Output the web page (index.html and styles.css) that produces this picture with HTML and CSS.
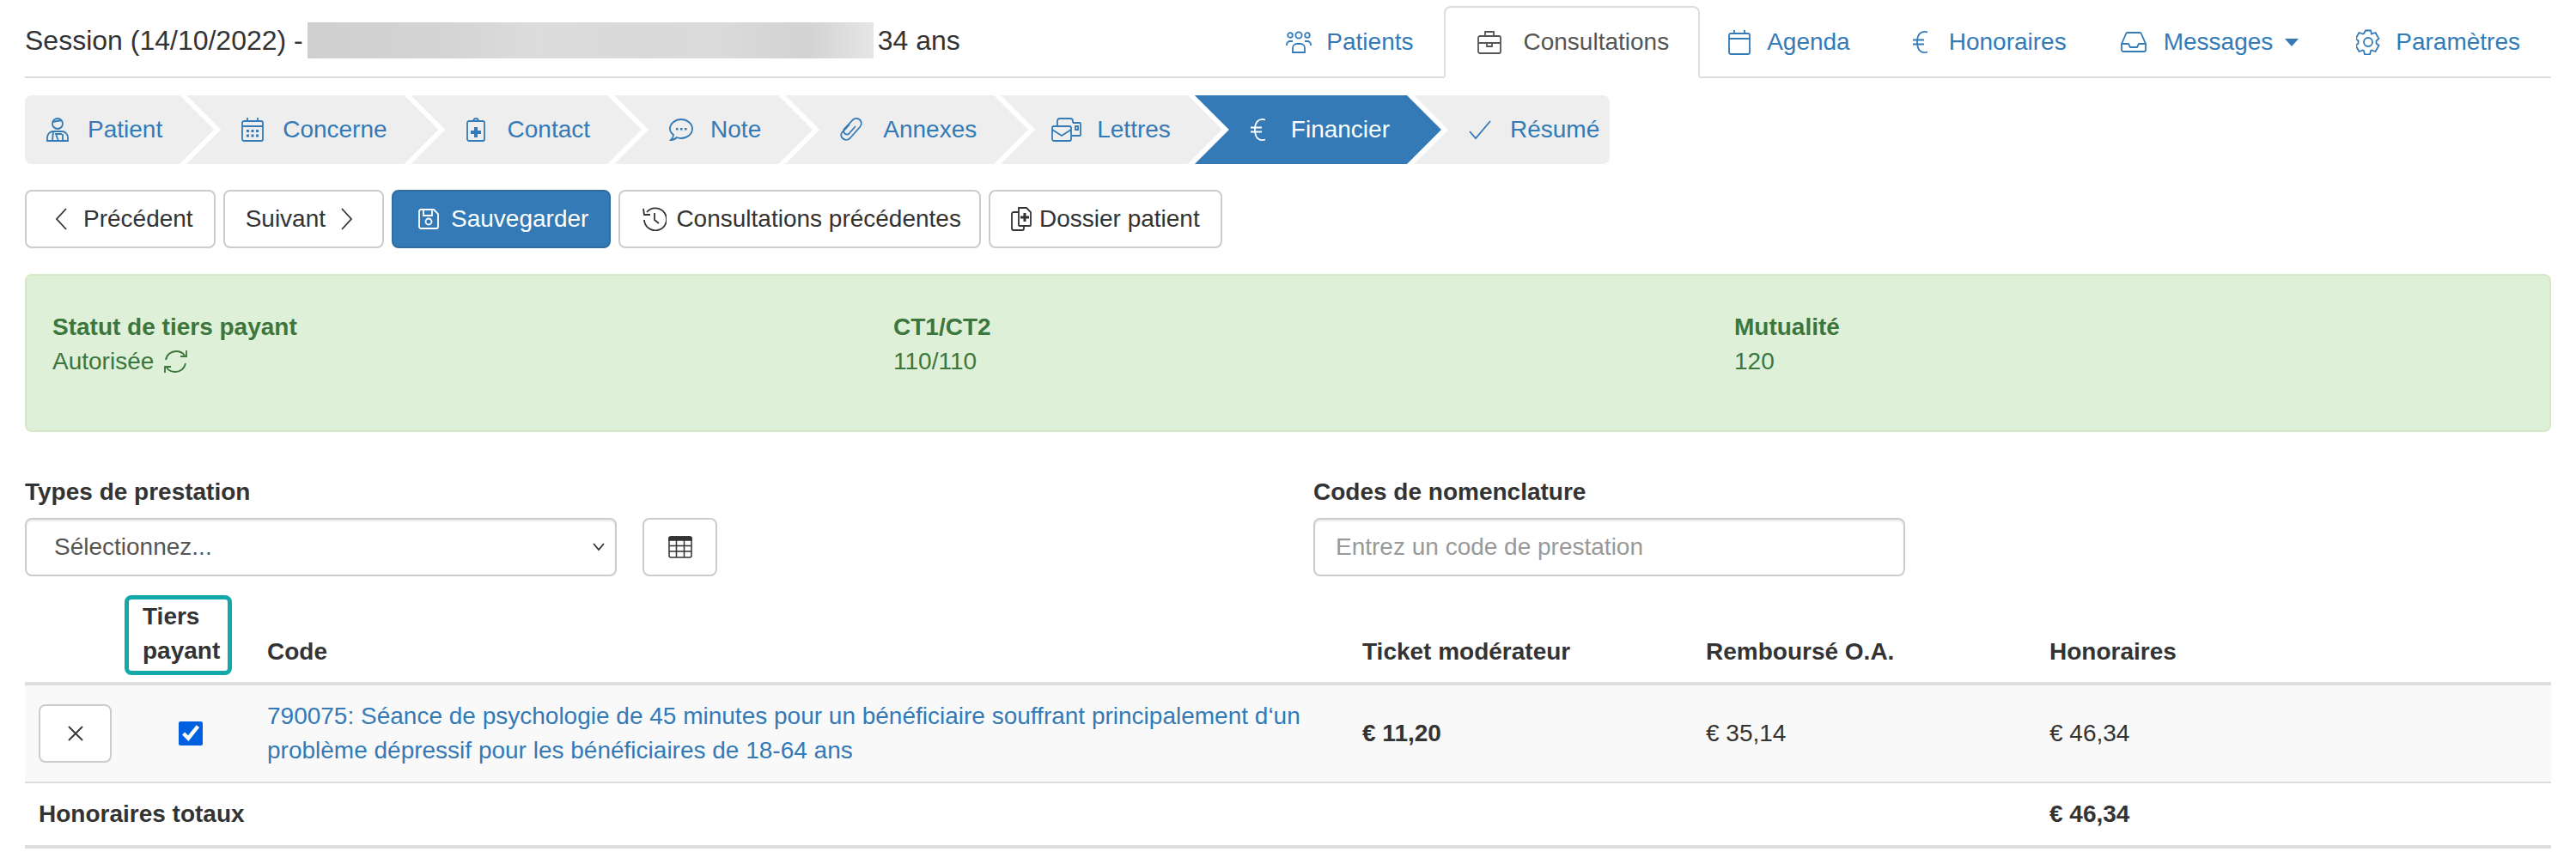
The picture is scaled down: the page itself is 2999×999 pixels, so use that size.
FILE: index.html
```html
<!DOCTYPE html>
<html lang="fr">
<head>
<meta charset="UTF-8">
<title>Session</title>
<link rel="stylesheet" href="styles.css">
</head>
<body>
<header class="top-bar">
    <div class="session-title">
        <span>Session (14/10/2022) -</span>
        <span class="blurred-name"></span>
        <span>34 ans</span>
    </div>
    <nav class="main-tabs">
        <a class="main-tab"><span class="tab-icon"><svg class="ic" width="30" height="28" viewBox="0 0 30 28"><circle cx="15" cy="6" r="3.6"/><circle cx="5" cy="6" r="2.8"/><circle cx="25" cy="6" r="2.8"/><path d="M8 26v-5a5 5 0 0 1 5-5h4a5 5 0 0 1 5 5v5zM1 18v-1a4 4 0 0 1 4-4h3M29 18v-1a4 4 0 0 0-4-4h-3"/></svg></span>Patients</a>
        <a class="main-tab active"><span class="tab-icon"><svg class="ic" width="28" height="28" viewBox="0 0 28 28"><rect x="1" y="7" width="26" height="20" rx="2"/><path d="M9 7V2h10v5M1 15h26M11 15v4h6v-4"/></svg></span>Consultations</a>
        <a class="main-tab tab-agenda"><span class="tab-icon"><svg class="ic" width="26" height="30" viewBox="0 0 26 30"><rect x="1" y="5" width="24" height="24" rx="2"/><path d="M1 11h24M7 1v4M19 1v4"/></svg></span>Agenda</a>
        <a class="main-tab"><span class="tab-icon"><svg class="ic" width="20" height="28" viewBox="0 0 20 28"><path d="M18 2.500c-8-2.500-12 3-12 11.500s4 14 12 11.500M1 11.500h13M1 16.500h13"/></svg></span>Honoraires</a>
        <a class="main-tab tab-messages"><span class="tab-icon"><svg class="ic" width="30" height="24" viewBox="0 0 30 24"><path d="M1 14 6 2.500a2 2 0 0 1 2-1.500h14a2 2 0 0 1 2 1.500L29 14v7a2 2 0 0 1-2 2H3a2 2 0 0 1-2-2zM1 14h8l2 4h8l2-4h8"/></svg></span>Messages<span class="caret"></span></a>
        <a class="main-tab tab-last"><span class="tab-icon"><svg class="ic" width="28" height="30" viewBox="0 0 28 30"><circle cx="14" cy="15" r="5"/><path d="M11 1.500h6l1 4 3-1 1.500-.5 4 7-3 2.500v3l3 2.500-4 7-4.500-1.500-1 .5-1 4.500h-6l-1-4.500-1-.5-4.500 1.500-4-7 3-2.500v-3l-3-2.500 4-7 4.500 1.500 1-.5z"/></svg></span>Paramètres</a>
    </nav>
</header>

<div class="steps">
    <a class="step first"><span class="step-icon"><svg class="ic" width="26" height="28" viewBox="0 0 26 28"><circle cx="13" cy="7" r="6"/><path d="M7 5 18 3M1 27v-4a7 7 0 0 1 7-7h10a7 7 0 0 1 7 7v4zM8 16l-1 11M14 27l-3-8h7M19 19v8"/></svg></span>Patient</a>
    <a class="step"><span class="step-icon"><svg class="ic" width="26" height="28" viewBox="0 0 26 28"><rect x="1" y="4" width="24" height="23" rx="2"/><path d="M1 10h24M7 0v4M19 0v4"/><path class="dots" d="M6 14h3v3H6zM11.500 14h3v3h-3zM17 14h3v3h-3zM6 19.500h3v3H6zM11.500 19.500h3v3h-3zM17 19.500h3v3h-3z"/></svg></span>Concerne</a>
    <a class="step"><span class="step-icon"><svg class="ic" width="22" height="28" viewBox="0 0 22 28"><rect x="1" y="4" width="20" height="23" rx="2"/><path d="M7 4h8M8 4a3 3 0 0 1 6 0"/><path class="dots" d="M9 11h4v4h4v4h-4v4H9v-4H5v-4h4z"/></svg></span>Contact</a>
    <a class="step"><span class="step-icon"><svg class="ic" width="28" height="28" viewBox="0 0 28 28"><path d="M14 2c7 0 13 5 13 11s-6 11-13 11c-2 0-4-.5-5-1-1.500 1.500-4 3-7 3 1.500-1.500 3-3.500 3-6-2.500-2-4-4-4-7C1 7 7 2 14 2z"/><path class="dots" d="M8 12h2.500v2.500H8zM13 12h2.500v2.500H13zM18 12h2.500v2.500H18z"/></svg></span>Note</a>
    <a class="step step-annexes"><span class="step-icon"><svg class="ic" width="26" height="28" viewBox="0 0 26 28"><path d="M11 8 3.500 16a5 5 0 0 0-.500 8c2.500 2.500 6 2.500 8.500 0L23 11c2.500-3 2-6.500 0-8.500s-5.500-2.500-8 0L5 13c-1.500 2-1 4 .500 5.500s3.500 1.500 5 0L18 10"/></svg></span>Annexes</a>
    <a class="step step-wide"><span class="step-icon"><svg class="ic" width="35" height="28" viewBox="0 0 35 28"><path d="M7 9V4a3 3 0 0 1 3-3h12a3 3 0 0 1 3 3v2"/><path d="M25 6h8a1 1 0 0 1 1 1v13a1 1 0 0 1-1 1h-9"/><rect x="1" y="10" width="22" height="17" rx="2"/><path d="m1 14 11 7 11-7M28 10h3v4h-3z"/></svg></span>Lettres</a>
    <a class="step current"><span class="step-icon"><svg class="ic" width="20" height="28" viewBox="0 0 20 28"><path d="M18 2.500c-8-2.500-12 3-12 11.500s4 14 12 11.500M1 11.500h13M1 16.500h13"/></svg></span>Financier</a>
    <a class="step last"><span class="step-icon"><svg class="ic" width="26" height="24" viewBox="0 0 26 24"><path d="m1 14 7 8L25 2"/></svg></span>Résumé</a>
</div>

<div class="actions">
    <button class="btn btn-prev"><svg class="ic" width="14" height="30" viewBox="0 0 14 30"><path d="M13 3 2 15l11 12"/></svg>Précédent</button>
    <button class="btn btn-next">Suivant<svg class="ic" width="14" height="30" viewBox="0 0 14 30"><path d="m1 3 11 12L1 27"/></svg></button>
    <button class="btn btn-primary"><svg class="ic" width="24" height="24" viewBox="0 0 24 24"><path d="M3 1h15l5 5v15a2 2 0 0 1-2 2H3a2 2 0 0 1-2-2V3a2 2 0 0 1 2-2z"/><path d="M6 1v7h10V1"/><circle cx="12" cy="15" r="3.500"/></svg>Sauvegarder</button>
    <button class="btn btn-history"><svg class="ic" width="28" height="28" viewBox="0 0 28 28"><path d="M5 6a13 13 0 1 1-3 9M1 2l1 7h7M14 7v8l5 4"/></svg>Consultations précédentes</button>
    <button class="btn btn-record"><svg class="ic" width="24" height="28" viewBox="0 0 24 28"><path d="M9 1h9l5 5v15a1 1 0 0 1-1 1H10a1 1 0 0 1-1-1z"/><path d="M9 6H3a2 2 0 0 0-2 2v17a2 2 0 0 0 2 2h10a2 2 0 0 0 2-2v-3"/><path class="dots" d="M14.500 7h3v3.500H21v3h-3.500V17h-3v-3.500H11v-3h3.500z"/></svg>Dossier patient</button>
</div>

<div class="alert-box">
    <div>
        <strong>Statut de tiers payant</strong>
        <div class="alert-value">Autorisée <svg class="ic" width="29" height="28" viewBox="0 0 29 28"><path d="M3 12C4 6 9 2 15 2c4 0 8 2 10 5M27 1v7h-7M26 16c-1 6-6 10-12 10-4 0-8-2-10-5M2 27v-7h7"/></svg></div>
    </div>
    <div>
        <strong>CT1/CT2</strong>
        <div class="alert-value">110/110</div>
    </div>
    <div>
        <strong>Mutualité</strong>
        <div class="alert-value">120</div>
    </div>
</div>

<form class="search-form">
    <div>
        <label class="field-label" for="typePrestation">Types de prestation</label>
        <div class="select-row">
            <div class="select-wrap">
                <select id="typePrestation" class="field">
                    <option>Sélectionnez...</option>
                </select>
                <svg class="ic select-arrow" width="14" height="10" viewBox="0 0 14 10"><path d="m1 1 6 7 6-7"/></svg>
            </div>
            <button type="button" class="btn btn-table"><svg class="ic table-ic" width="28" height="26" viewBox="0 0 28 26"><rect x="1" y="1" width="26" height="24" rx="2"/><path class="table-head" d="M1 3a2 2 0 0 1 2-2h22a2 2 0 0 1 2 2v2H1z"/><path d="M1 11.500h26M1 18h26M9.500 5v20M18.500 5v20"/></svg></button>
        </div>
    </div>
    <div>
        <label class="field-label" for="codePrestation">Codes de nomenclature</label>
        <input id="codePrestation" class="field" type="text" placeholder="Entrez un code de prestation">
    </div>
</form>

<table class="fees">
    <colgroup>
        <col class="col-del"><col class="col-tp"><col class="col-code"><col class="col-amount"><col class="col-amount"><col>
    </colgroup>
    <thead>
        <tr>
            <th></th>
            <th class="th-tp"><span class="tp-highlight">Tiers payant</span></th>
            <th>Code</th>
            <th>Ticket modérateur</th>
            <th>Remboursé O.A.</th>
            <th>Honoraires</th>
        </tr>
    </thead>
    <tbody>
        <tr class="fee-row">
            <td><button class="btn btn-delete"><svg class="ic" width="20" height="20" viewBox="0 0 20 20"><path d="m2 2 16 16M18 2 2 18"/></svg></button></td>
            <td class="td-check"><input type="checkbox" checked></td>
            <td><a class="code-link">790075: Séance de psychologie de 45 minutes pour un bénéficiaire souffrant principalement d‘un problème dépressif pour les bénéficiaires de 18-64 ans</a></td>
            <td><strong>€ 11,20</strong></td>
            <td>€ 35,14</td>
            <td>€ 46,34</td>
        </tr>
    </tbody>
    <tfoot>
        <tr>
            <th colspan="5">Honoraires totaux</th>
            <th>€ 46,34</th>
        </tr>
    </tfoot>
</table>
</body>
</html>
```

FILE: styles.css
```css
* {
    box-sizing: border-box;
}
body {
    margin: 0;
    padding: 0 29px;
    font-family: "Liberation Sans", Arial, sans-serif;
    font-size: 28px;
    line-height: 40px;
    color: #333;
    background-color: #fff;
}
.ic {
    fill: none;
    stroke: currentColor;
    stroke-width: 1.8;
    flex: none;
}
.ic .dots {
    fill: currentColor;
    stroke: none;
}

/* header + tabs */
.top-bar {
    display: flex;
    justify-content: space-between;
    height: 91px;
    border-bottom: 2px solid #ddd;
}
.session-title {
    display: flex;
    align-items: center;
    gap: 5px;
    height: 42px;
    margin-top: 26px;
    font-size: 32px;
}
.blurred-name {
    width: 659px;
    height: 42px;
    background: linear-gradient(90deg, #cfcfcf 0%, #d4d4d4 25%, #dcdcdc 40%, #d9d9d9 60%, #dbdbdb 72%, #d2d2d2 88%, #e6e6e6 100%);
}
.main-tabs {
    display: flex;
    align-items: flex-end;
}
.main-tab {
    display: flex;
    align-items: center;
    height: 84px;
    margin-left: 4px;
    margin-bottom: -2px;
    padding: 0 29px 0 28px;
    border: 2px solid transparent;
    border-radius: 8px 8px 0 0;
    color: #337ab7;
}
.main-tab.active {
    padding: 0 34px 0 34px;
    border-color: #ddd #ddd #fff;
    background-color: #fff;
    color: #555;
}
.main-tab.active .tab-icon {
    margin-right: 22px;
}
.main-tab.tab-agenda {
    padding-left: 22px;
}
.main-tab.tab-messages {
    padding: 0 27px 0 24px;
}
.tab-messages .tab-icon {
    margin-right: 17px;
}
.main-tab.tab-last {
    padding-right: 34px;
}
.tab-icon {
    display: flex;
    justify-content: center;
    width: 35px;
    margin-right: 15px;
}
.caret {
    width: 0;
    height: 0;
    margin-left: 14px;
    border-top: 9px solid #337ab7;
    border-left: 8px solid transparent;
    border-right: 8px solid transparent;
}

/* wizard steps */
.steps {
    display: inline-flex;
    height: 80px;
    margin-top: 20px;
    border-radius: 8px;
    overflow: hidden;
    vertical-align: top;
}
.step {
    display: flex;
    align-items: center;
    margin-left: -32px;
    padding: 0 60px 0 64px;
    background-color: #eee;
    color: #337ab7;
    clip-path: polygon(0 0, calc(100% - 40px) 0, 100% 50%, calc(100% - 40px) 100%, 0 100%, 40px 50%);
}
.step.first {
    margin-left: 0;
    padding-left: 25px;
    clip-path: polygon(0 0, calc(100% - 40px) 0, 100% 50%, calc(100% - 40px) 100%, 0 100%);
}
.step.last {
    padding-right: 12px;
    clip-path: polygon(0 0, 100% 0, 100% 100%, 0 100%, 40px 50%);
}
.step.current {
    background-color: #337ab7;
    color: #fff;
}
.step-icon {
    display: flex;
    width: 26px;
    margin-right: 22px;
}
.step-annexes .step-icon {
    margin-right: 24px;
}
.step-wide {
    padding-left: 59px;
}
.step-wide .step-icon {
    width: 35px;
    margin-right: 18px;
}

/* buttons */
.actions {
    display: flex;
    gap: 9px;
    margin-top: 30px;
}
.btn {
    display: inline-flex;
    align-items: center;
    height: 68px;
    padding: 0 24px;
    border: 2px solid #ccc;
    border-radius: 8px;
    background-color: #fff;
    color: #333;
    font: inherit;
}
.btn-prev {
    padding-left: 33px;
    gap: 19px;
}
.btn-next {
    padding-right: 34px;
    gap: 18px;
}
.btn-primary {
    padding-left: 29px;
    gap: 14px;
    border-color: #2e6da4;
    background-color: #337ab7;
    color: #fff;
}
.btn-history {
    padding: 0 21px 0 26px;
    gap: 11px;
}
.btn-record {
    gap: 9px;
}

/* status */
.alert-box {
    display: grid;
    grid-template-columns: 979px 979px 1fr;
    height: 184px;
    margin-top: 30px;
    padding: 40px 30px 0;
    border: 2px solid #d6e9c6;
    border-radius: 8px;
    background-color: #dff0d8;
    color: #3c763d;
}
.alert-value {
    display: flex;
    align-items: center;
    gap: 11px;
}

/* prestation form */
.search-form {
    display: grid;
    grid-template-columns: 1500px 689px;
    margin-top: 50px;
}
.field-label {
    display: block;
    margin-bottom: 10px;
    font-weight: bold;
}
.select-row {
    display: flex;
    gap: 30px;
}
.select-wrap {
    position: relative;
    width: 689px;
}
.select-arrow {
    position: absolute;
    top: 29px;
    right: 14px;
    pointer-events: none;
}
.field {
    display: block;
    width: 100%;
    height: 68px;
    padding: 0 24px;
    border: 2px solid #ccc;
    border-radius: 8px;
    background-color: #fff;
    box-shadow: inset 0 2px 2px rgba(0, 0, 0, 0.075);
    color: #555;
    font: inherit;
    appearance: none;
}
select.field {
    padding-left: 32px;
}
.field::placeholder {
    color: #999;
    opacity: 1;
}
.btn-table {
    width: 87px;
    justify-content: center;
    padding: 0;
}
.table-ic {
    stroke-width: 1.5;
}
.table-ic .table-head {
    fill: currentColor;
}

/* fees table */
.fees {
    width: 100%;
    margin-top: 22px;
    border-collapse: separate;
    border-spacing: 0;
    table-layout: fixed;
}
.col-del {
    width: 116px;
}
.col-tp {
    width: 150px;
}
.col-code {
    width: 1275px;
}
.col-amount {
    width: 400px;
}
.fees th,
.fees td {
    padding: 16px;
    text-align: left;
}
.fees thead th {
    padding-top: 0;
    padding-bottom: 15px;
    vertical-align: bottom;
    border-bottom: 4px solid #ddd;
}
.fees thead .th-tp {
    padding: 0 0 8px;
}
.tp-highlight {
    display: block;
    width: 125px;
    padding: 0 0 3px 16px;
    border: 5px solid #14a9a9;
    border-radius: 8px;
}
.fee-row td {
    vertical-align: middle;
    background-color: #f9f9f9;
    border-bottom: 2px solid #ddd;
}
.fees tfoot th {
    border-bottom: 4px solid #ddd;
}
.btn-delete {
    width: 85px;
    justify-content: center;
    padding: 0;
}
.td-check input {
    display: block;
    width: 28px;
    height: 28px;
    margin: 0 0 0 47px;
    accent-color: #0060df;
}
.code-link {
    color: #337ab7;
}
```
